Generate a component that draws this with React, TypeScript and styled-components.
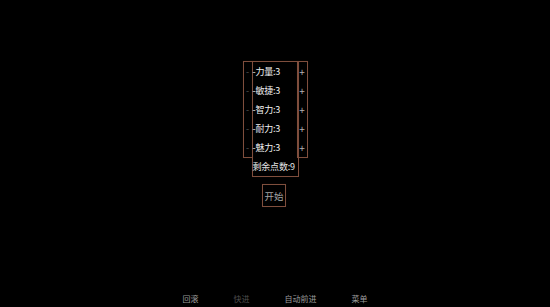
import styled, { createGlobalStyle } from "styled-components";

const GlobalStyle = createGlobalStyle`
  html, body {
    margin: 0;
    padding: 0;
    background: #000;
  }
  body {
    font-family: "Noto Sans CJK SC", "Noto Sans", sans-serif;
  }
`;

const frame = "#7f4e3d";

const Page = styled.div`
  height: 100vh;
  display: flex;
  flex-direction: column;
  background: #000;
`;

const Main = styled.main`
  display: flex;
  flex-direction: column;
  align-items: center;
  padding-top: 61px;
`;

const Panel = styled.div`
  display: flex;
  align-items: flex-start;
`;

const Column = styled.div<{ $width: number; $overlap?: number }>`
  display: flex;
  flex-direction: column;
  width: ${(p) => p.$width}px;
  margin-left: ${(p) => -(p.$overlap ?? 0)}px;
  border: 1px solid ${frame};
  box-shadow: 0 0 0.5px ${frame};
`;

const Cell = styled.div<{ $color: string; $center?: boolean; $size?: number }>`
  height: 19px;
  display: flex;
  align-items: center;
  justify-content: ${(p) => (p.$center ? "center" : "flex-start")};
  font-size: ${(p) => p.$size ?? 9}px;
  color: ${(p) => p.$color};
  white-space: nowrap;
  letter-spacing: -0.2px;
  cursor: default;
`;

const StartButton = styled.button`
  margin-top: 7px;
  margin-right: 2px;
  width: 24px;
  height: 23px;
  padding: 0;
  background: transparent;
  border: 1px solid ${frame};
  box-shadow: 0 0 0.5px ${frame};
  color: #a4a4a4;
  font-family: inherit;
  font-size: 9.5px;
`;

const Footer = styled.nav`
  margin-top: auto;
  display: flex;
  justify-content: center;
  gap: 35px;
  padding-bottom: 2px;
  height: 14px;
  align-items: center;
`;

const MenuItem = styled.span<{ $disabled?: boolean }>`
  font-size: 8px;
  color: ${(p) => (p.$disabled ? "#4e4e4e" : "#9c9c9c")};
`;

const stats = [
  { name: "力量", value: 3 },
  { name: "敏捷", value: 3 },
  { name: "智力", value: 3 },
  { name: "耐力", value: 3 },
  { name: "魅力", value: 3 },
];

export default function App() {
  return (
    <Page>
      <GlobalStyle />
      <Main>
        <Panel>
          <Column $width={8}>
            {stats.map((s) => (
              <Cell key={s.name} $color="#5a5a5a" $center>
                -
              </Cell>
            ))}
          </Column>
          <Column $width={45} $overlap={1}>
            {stats.map((s) => (
              <Cell key={s.name} $color="#f0f0f0">
                -{s.name}:{s.value}
              </Cell>
            ))}
            <Cell $color="#e4e4e4">剩余点数:9</Cell>
          </Column>
          <Column $width={9} $overlap={2}>
            {stats.map((s) => (
              <Cell key={s.name} $color="#b4b4b4" $center $size={10}>
                +
              </Cell>
            ))}
          </Column>
        </Panel>
        <StartButton>开始</StartButton>
      </Main>
      <Footer>
        <MenuItem>回滚</MenuItem>
        <MenuItem $disabled>快进</MenuItem>
        <MenuItem>自动前进</MenuItem>
        <MenuItem>菜单</MenuItem>
      </Footer>
    </Page>
  );
}
